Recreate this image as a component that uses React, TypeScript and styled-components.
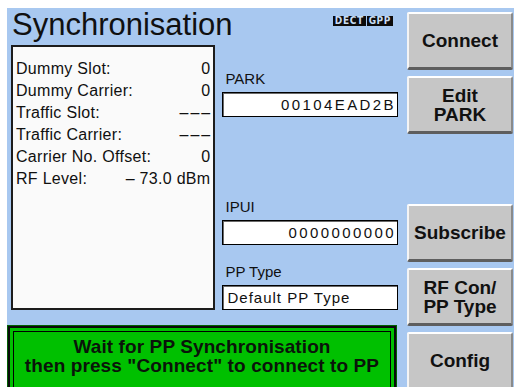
import React from "react";
import styled, { createGlobalStyle } from "styled-components";

const GlobalStyle = createGlobalStyle`
  body {
    margin: 0;
    background: #ffffff;
    font-family: "Liberation Sans", Arial, sans-serif;
    color: #101010;
  }
`;

const dashes = "\u2013\u200a\u2013\u200a\u2013";

const infoRows = [
  { label: "Dummy Slot:", value: "0" },
  { label: "Dummy Carrier:", value: "0" },
  { label: "Traffic Slot:", value: dashes },
  { label: "Traffic Carrier:", value: dashes },
  { label: "Carrier No. Offset:", value: "0" },
  { label: "RF Level:", value: "\u2013 73.0 dBm" },
];

const softkeys: (string[] | null)[] = [
  ["Connect"],
  ["Edit", "PARK"],
  null,
  ["Subscribe"],
  ["RF Con/", "PP Type"],
  ["Config"],
];

const App = () => {
  return (
    <Page>
      <GlobalStyle />
      <Panel>
        <Main>
          <Header>
            <Title>Synchronisation</Title>
            <Badges>
              <Badge>DECT</Badge>
              <Badge>GPP</Badge>
            </Badges>
          </Header>
          <Body>
            <InfoBox>
              {infoRows.map((row) => (
                <InfoRow key={row.label}>
                  <span>{row.label}</span>
                  <span>{row.value}</span>
                </InfoRow>
              ))}
            </InfoBox>
            <Fields>
              <FieldGroup top={25}>
                <FieldLabel>PARK</FieldLabel>
                <Field align="right">00104EAD2B</Field>
              </FieldGroup>
              <FieldGroup top={81}>
                <FieldLabel>IPUI</FieldLabel>
                <Field align="right">0000000000</Field>
              </FieldGroup>
              <FieldGroup top={18}>
                <FieldLabel>PP Type</FieldLabel>
                <Field align="left">Default PP Type</Field>
              </FieldGroup>
            </Fields>
          </Body>
          <Status>
            <StatusInner>
              Wait for PP Synchronisation
              <br />
              then press "Connect" to connect to PP
            </StatusInner>
          </Status>
        </Main>
        <Keys>
          {softkeys.map((lines, i) =>
            lines ? (
              <SoftKey key={i}>
                {lines.map((l) => (
                  <span key={l}>{l}</span>
                ))}
              </SoftKey>
            ) : (
              <KeyGap key={i} />
            )
          )}
        </Keys>
      </Panel>
    </Page>
  );
};

export default App;

const Page = styled.div`
  padding: 8px 0 0 7px;
`;

const Panel = styled.div`
  width: 507px;
  height: 379px;
  background: #a8c8f0;
  display: grid;
  grid-template-columns: 391px 106px;
  column-gap: 9px;
  overflow: hidden;
`;

const Main = styled.div`
  display: flex;
  flex-direction: column;
`;

const Header = styled.div`
  height: 37px;
  display: flex;
  align-items: flex-start;
`;

const Title = styled.h1`
  margin: 0;
  padding: 1px 0 0 5px;
  font-size: 31px;
  line-height: 31px;
  font-weight: 400;
  color: #101010;
`;

const Badges = styled.div`
  margin: 8px 5px 0 auto;
  display: flex;
  gap: 1px;
`;

const Badge = styled.span`
  background: #0c0c0c;
  color: #c8dcf4;
  font-family: "DejaVu Sans Condensed", "DejaVu Sans", sans-serif;
  font-weight: 700;
  font-size: 10px;
  line-height: 10px;
  height: 10px;
  padding: 0 2px;
  letter-spacing: 0.6px;
`;

const Body = styled.div`
  display: flex;
  height: 265px;
`;

const InfoBox = styled.div`
  box-sizing: border-box;
  margin-left: 4px;
  width: 205px;
  height: 265px;
  background: #fafafa;
  border: 2px solid #1c1c1c;
  padding: 11px 3px 0 3px;
`;

const InfoRow = styled.div`
  display: flex;
  justify-content: space-between;
  font-size: 16px;
  line-height: 22px;
  letter-spacing: 0.3px;
  white-space: pre;
`;

const Fields = styled.div`
  margin-left: 7px;
  width: 176px;
  display: flex;
  flex-direction: column;
`;

const FieldGroup = styled.div<{ top: number }>`
  margin-top: ${({ top }) => top}px;
  display: flex;
  flex-direction: column;
  gap: 4px;
`;

const FieldLabel = styled.div`
  font-size: 15px;
  line-height: 18px;
  padding-left: 3px;
`;

const Field = styled.div<{ align: "left" | "right" }>`
  box-sizing: border-box;
  height: 25px;
  background: #ffffff;
  border: 1px solid #000;
  box-shadow: inset 1px 1px 0 #6a6a6a;
  font-size: 15px;
  line-height: 23px;
  text-align: ${({ align }) => align};
  letter-spacing: ${({ align }) => (align === "right" ? "2.4px" : "1px")};
  padding: 0 ${({ align }) => (align === "right" ? "1px" : "0")} 0 4px;
`;

const Status = styled.div`
  margin-top: 15px;
  width: 390px;
  height: 72px;
  box-sizing: border-box;
  background: #00c000;
  border: 3px solid #0a0a0a;
  outline: 1px solid #006000;
  outline-offset: -1px;
  padding: 3px;
`;

const StatusInner = styled.div`
  height: 100%;
  box-sizing: border-box;
  border: 1px solid #000;
  padding-top: 5px;
  text-align: center;
  font-weight: 700;
  font-size: 19px;
  line-height: 19px;
  letter-spacing: 0.1px;
  color: #0a140a;
`;

const Keys = styled.div`
  padding-top: 4px;
  display: flex;
  flex-direction: column;
  gap: 6px;
`;

const KeyGap = styled.div`
  height: 58px;
  flex: none;
`;

const SoftKey = styled.div`
  flex: none;
  box-sizing: border-box;
  height: 58px;
  background: #c6c6c6;
  border-top: 2px solid #ffffff;
  border-left: 2px solid #f4f4f4;
  border-right: 2px solid #8a8a8a;
  border-bottom: 3px solid #5e5e5e;
  border-radius: 2px;
  display: flex;
  flex-direction: column;
  align-items: center;
  justify-content: center;
  font-weight: 700;
  font-size: 19px;
  line-height: 19px;
  color: #111;
`;
